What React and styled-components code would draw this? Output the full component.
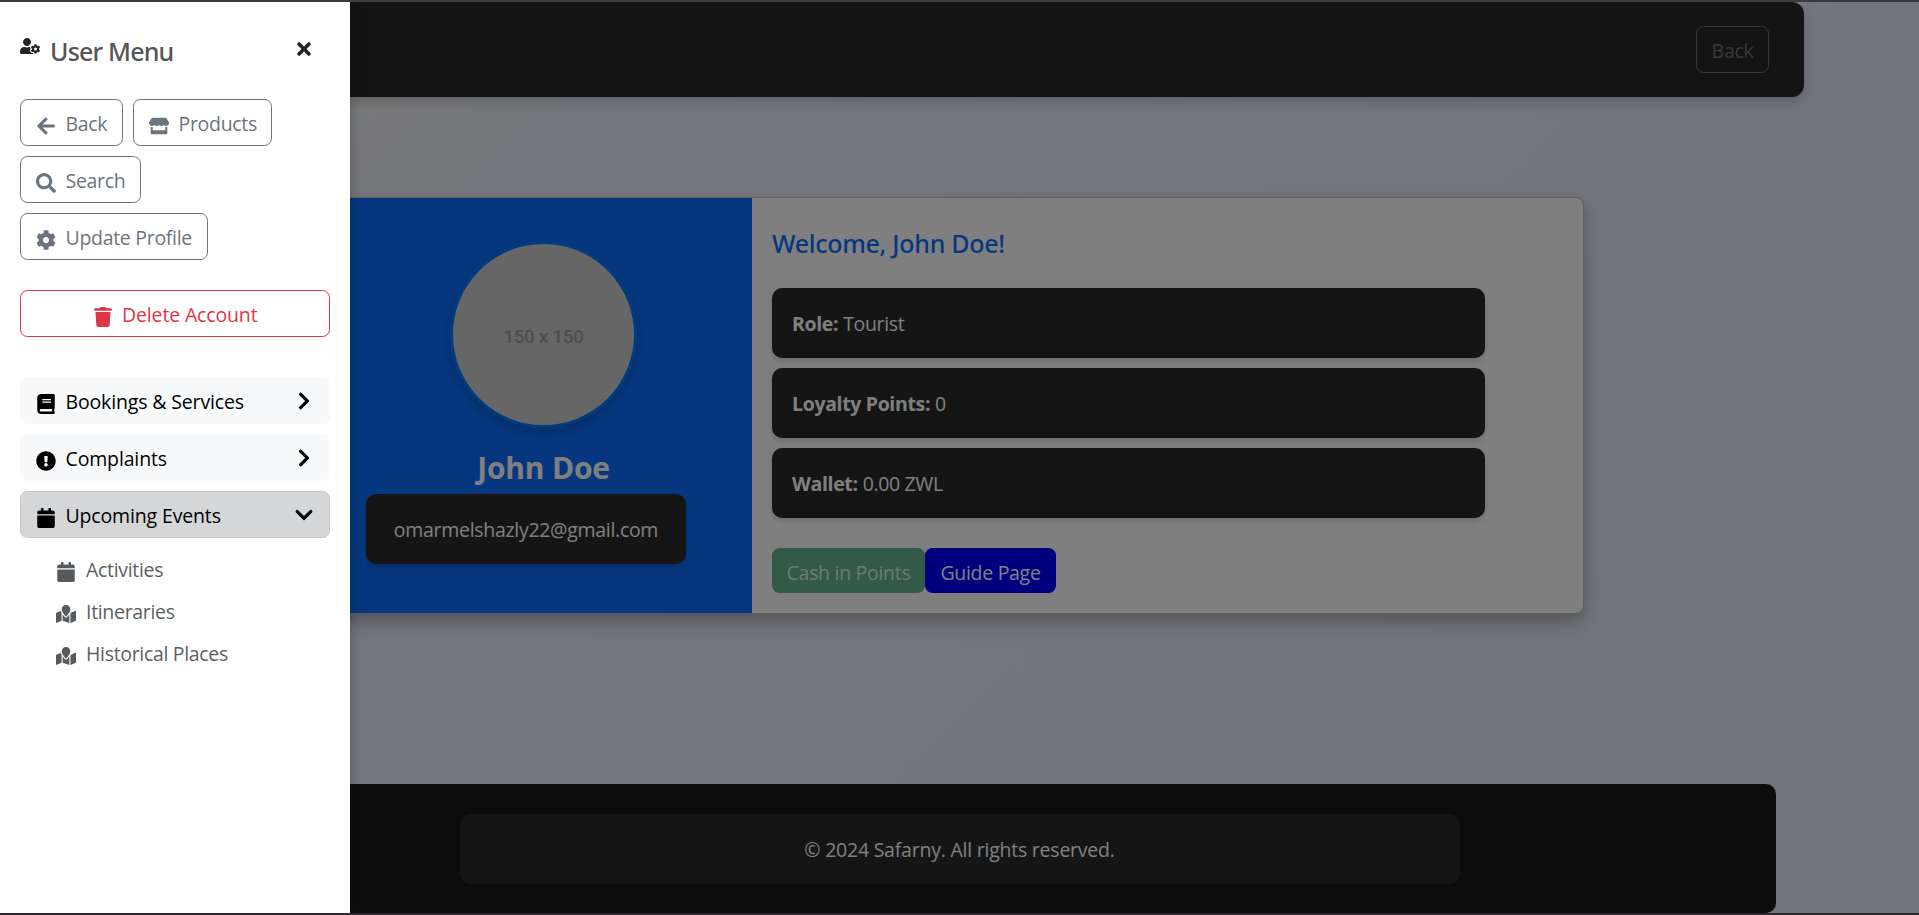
import React from "react";
import styled, { createGlobalStyle, css } from "styled-components";
import {
  FaUserCog, FaArrowLeft, FaStore, FaSearch, FaCog, FaTrash, FaBook, FaTimes,
  FaExclamationCircle, FaCalendar, FaMapMarked, FaChevronRight, FaChevronDown,
} from "react-icons/fa";

const Global = createGlobalStyle`
  *, *::before, *::after { box-sizing: border-box; }
  html, body { margin: 0; overflow: hidden; }
  body {
    font-family: "Segoe UI", "Open Sans", "Noto Sans", sans-serif;
    font-size: 19.5px;
    line-height: 30px;
    letter-spacing: -0.3px;
    color: #212529;
  }
  h2, h5, p, ul { margin: 0; padding: 0; font-weight: inherit; list-style: none; }
  button { font: inherit; letter-spacing: inherit; margin: 0; }
  svg { display: block; flex: none; }
`;

const Frame = styled.div`
  position: relative;
  height: 915px;
  border-top: 2px solid #3c3c3c;
  border-bottom: 2px solid #2c2a2c;
  overflow: hidden;
`;

const Page = styled.div`
  height: 911px;
  display: flex;
  flex-direction: column;
  align-items: center;
  background: linear-gradient(135deg, #f5f4f4 0%, #f1f2f4 17%, #eaedf8 24%, #e8ecfa 50%, #e3e9f5 100%);
`;

const Header = styled.header`
  width: 1689px;
  height: 95px;
  display: flex;
  align-items: center;
  justify-content: flex-end;
  padding: 0 35px;
  background: #282828;
  border-radius: 12px;
  box-shadow: 0 5px 12px rgba(0, 0, 0, 0.18);
`;

const HeaderButton = styled.button`
  width: 73px;
  height: 47px;
  padding: 3px 0 0;
  background: transparent;
  border: 1px solid #6c757d;
  border-radius: 7.5px;
  color: #6c757d;
`;

const Main = styled.main`
  flex: 1;
  padding: 100px 1px 0 0;
`;

const Card = styled.section`
  width: 1250px;
  height: 416px;
  display: flex;
  border: 1px solid #c4c4c4;
  border-bottom: 0;
  border-radius: 8px;
  background: #fff;
  box-shadow: 0 10px 20px rgba(0, 0, 0, 0.19), 0 6px 12px rgba(0, 0, 0, 0.12);
`;

const Profile = styled.div`
  width: 417px;
  display: flex;
  flex-direction: column;
  align-items: center;
  padding-top: 43px;
  background: #0d6efd;
  border-radius: 8px 0 0 8px;
  color: #fff;
`;

const Avatar = styled.div`
  width: 187px;
  height: 187px;
  display: flex;
  align-items: center;
  justify-content: center;
  padding-top: 4px;
  border: 3px solid #007bff;
  border-radius: 50%;
  background: #ccc;
  box-shadow: 0 5px 12px rgba(0, 0, 0, 0.18);
  color: #9c9c9c;
  font: 500 18.5px "Roboto", sans-serif;
  letter-spacing: -0.15px;
`;

const Name = styled.h2`
  margin-top: 22px;
  font-size: 30px;
  line-height: 36px;
  font-weight: 700;
  letter-spacing: -0.2px;
`;

const panel = css`
  display: flex;
  align-items: center;
  height: 70px;
  padding-top: 2px;
  background: #2a2a2a;
  border-radius: 10px;
  box-shadow: 0 3px 6px rgba(0, 0, 0, 0.15);
  color: #fff;
`;

const Email = styled.p`
  ${panel}
  align-self: flex-start;
  justify-content: center;
  width: 320px;
  margin: 8px 0 0 31px;
`;

const Details = styled.div`
  flex: 1;
  padding: 30px 20px 0;
`;

const titleText = css`
  font-family: "Noto Sans", sans-serif;
  font-size: 25px;
  line-height: 30px;
  font-weight: 500;
`;

const Welcome = styled.h5`
  ${titleText}
  letter-spacing: -0.3px;
  color: #0d6efd;
  margin-bottom: 30px;
`;

const InfoRow = styled.p`
  ${panel}
  gap: 5px;
  width: 713px;
  padding-left: 20px;
  margin-bottom: 10px;
  letter-spacing: -0.35px;
  strong { font-weight: 700; }
`;

const Actions = styled.div`
  display: flex;
  margin-top: 30px;
`;

const ActionButton = styled.button`
  width: ${(p) => p.$width}px;
  height: 45px;
  padding: 4px 0 0;
  border: 0;
  border-radius: 7.5px;
  background: ${(p) => p.$bg};
  color: ${(p) => p.$color || "#fff"};
  white-space: nowrap;
`;

const Footer = styled.footer`
  width: 1633px;
  height: 129px;
  padding-top: 30px;
  display: flex;
  justify-content: center;
  background: #1a1a1a;
  border-radius: 10px;
`;

const Copyright = styled.p`
  ${panel}
  width: 1000px;
  justify-content: center;
  letter-spacing: -0.23px;
`;

const Backdrop = styled.div`
  position: absolute;
  inset: 0;
  background: rgba(0, 0, 0, 0.5);
`;

const Sidebar = styled.aside`
  position: absolute;
  left: 0;
  top: 0;
  bottom: 0;
  width: 350px;
  padding: 34px 20px 0;
  background: #fff;
  box-shadow: 2px 0 10px rgba(0, 0, 0, 0.2);
`;

const MenuHeader = styled.div`
  display: flex;
  height: 63px;
  align-items: flex-start;
`;

const MenuTitle = styled.h5`
  ${titleText}
  margin: 0 auto 0 10px;
  letter-spacing: -0.8px;
  color: #555;
`;

const CloseIcon = styled(FaTimes)`
  margin: 3px 16px 0 0;
`;

const ButtonGroup = styled.div`
  display: flex;
  flex-wrap: wrap;
  gap: 10px;
`;

const button = css`
  display: flex;
  align-items: center;
  height: 47px;
  border-radius: 7.5px;
  padding: 3px 15px 0;
  > svg { margin: 3px 9.5px 0 0; }
`;

const OutlineButton = styled.button`
  ${button}
  width: ${(p) => p.$width}px;
  justify-content: ${(p) => (p.$center ? "center" : "flex-start")};
  margin-top: ${(p) => (p.$center ? "30px" : 0)};
  background: #fff;
  border: 1px solid ${(p) => p.$color};
  color: ${(p) => p.$color};
  letter-spacing: ${(p) => (p.$center ? "-0.15px" : "-0.3px")};
  white-space: nowrap;
`;

const Sections = styled.div`
  display: flex;
  flex-direction: column;
  gap: 10px;
  margin-top: 40px;
`;

const SectionButton = styled.button`
  ${button}
  background: ${(p) => (p.$open ? "#d5d6d8" : "#f8f9fa")};
  border: 1px solid ${(p) => (p.$open ? "#c6c7c8" : "#f8f9fa")};
  color: #000;
  letter-spacing: -0.15px;
  > span { margin-right: auto; }
  > svg:last-child { margin: -3px 0 0; }
`;

const SubMenu = styled.ul`
  margin-top: 11px;
  padding-left: 36px;
`;

const SubItem = styled.li`
  display: flex;
  align-items: center;
  height: 42px;
  color: #5c5f62;
  letter-spacing: -0.32px;
  svg { margin: 4px 10px 0 0; color: #565a5d; }
`;

const GREY = "#6c757d";
const actions = [
  { Icon: FaArrowLeft, label: "Back", width: 103 },
  { Icon: FaStore, label: "Products", width: 139 },
  { Icon: FaSearch, label: "Search", width: 121 },
  { Icon: FaCog, label: "Update Profile", width: 188 },
];
const sections = [
  { Icon: FaBook, label: "Bookings & Services" },
  { Icon: FaExclamationCircle, label: "Complaints" },
  { Icon: FaCalendar, label: "Upcoming Events", open: true },
];
const events = [
  { Icon: FaCalendar, label: "Activities" },
  { Icon: FaMapMarked, label: "Itineraries" },
  { Icon: FaMapMarked, label: "Historical Places" },
];
const info = [
  ["Role:", "Tourist"],
  ["Loyalty Points:", "0"],
  ["Wallet:", "0.00 ZWL"],
];

export default function App() {
  return (
    <Frame>
      <Global />
      <Page>
        <Header><HeaderButton>Back</HeaderButton></Header>
        <Main>
          <Card>
            <Profile>
              <Avatar>150 x 150</Avatar>
              <Name>John Doe</Name>
              <Email>omarmelshazly22@gmail.com</Email>
            </Profile>
            <Details>
              <Welcome>Welcome, John Doe!</Welcome>
              {info.map(([name, value]) => (
                <InfoRow key={name}><strong>{name}</strong> <span>{value}</span></InfoRow>
              ))}
              <Actions>
                <ActionButton $width={153} $bg="#66b28f" $color="#e0f0e8">Cash in Points</ActionButton>
                <ActionButton $width={131} $bg="#0000ff">Guide Page</ActionButton>
              </Actions>
            </Details>
          </Card>
        </Main>
        <Footer><Copyright>© 2024 Safarny. All rights reserved.</Copyright></Footer>
      </Page>
      <Backdrop />
      <Sidebar>
        <MenuHeader>
          <FaUserCog size={20} />
          <MenuTitle>User Menu</MenuTitle>
          <CloseIcon size={20} />
        </MenuHeader>
        <ButtonGroup>
          {actions.map(({ Icon, label, width }) => (
            <OutlineButton key={label} $color={GREY} $width={width}><Icon size={20} />{label}</OutlineButton>
          ))}
        </ButtonGroup>
        <OutlineButton $color="#dc3545" $width={310} $center><FaTrash size={20} />Delete Account</OutlineButton>
        <Sections>
          {sections.map(({ Icon, label, open }) => (
            <SectionButton key={label} $open={open}>
              <Icon size={20} />
              <span>{label}</span>
              {open ? <FaChevronDown size={20} /> : <FaChevronRight size={20} />}
            </SectionButton>
          ))}
        </Sections>
        <SubMenu>
          {events.map(({ Icon, label }) => (
            <SubItem key={label}><Icon size={20} />{label}</SubItem>
          ))}
        </SubMenu>
      </Sidebar>
    </Frame>
  );
}
